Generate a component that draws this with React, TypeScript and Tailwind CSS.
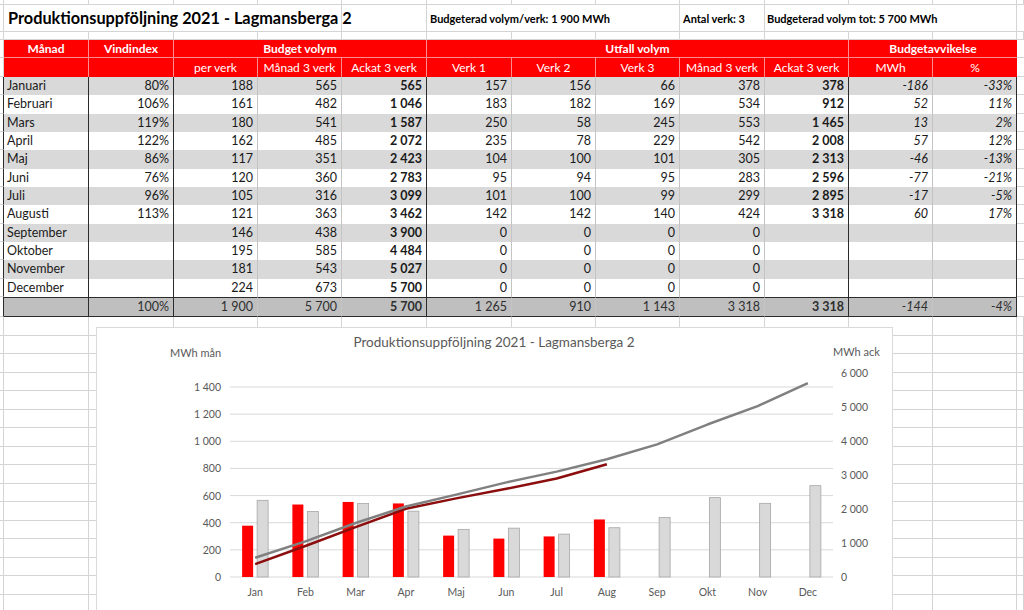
import React from 'react';

const GRID = 'grid grid-cols-[4px_85px_85px_84px_84px_85px_85px_84px_84px_85px_84px_84px_84px_7px]';
const GRIDLINE = 'border-[#d4d4d4]';
const DARK = 'border-[#2b2b2b]';
const LIGHT = 'border-[#c4c4c4]';

// right border colour for the 12 table columns (Månad .. %)
const rightBorder = [DARK, DARK, LIGHT, LIGHT, DARK, LIGHT, LIGHT, LIGHT, LIGHT, DARK, LIGHT, DARK];

const rows: string[][] = [
    ['Januari', '80%', '188', '565', '565', '157', '156', '66', '378', '378', '-186', '-33%'],
    ['Februari', '106%', '161', '482', '1 046', '183', '182', '169', '534', '912', '52', '11%'],
    ['Mars', '119%', '180', '541', '1 587', '250', '58', '245', '553', '1 465', '13', '2%'],
    ['April', '122%', '162', '485', '2 072', '235', '78', '229', '542', '2 008', '57', '12%'],
    ['Maj', '86%', '117', '351', '2 423', '104', '100', '101', '305', '2 313', '-46', '-13%'],
    ['Juni', '76%', '120', '360', '2 783', '95', '94', '95', '283', '2 596', '-77', '-21%'],
    ['Juli', '96%', '105', '316', '3 099', '101', '100', '99', '299', '2 895', '-17', '-5%'],
    ['Augusti', '113%', '121', '363', '3 462', '142', '142', '140', '424', '3 318', '60', '17%'],
    ['September', '', '146', '438', '3 900', '0', '0', '0', '0', '', '', ''],
    ['Oktober', '', '195', '585', '4 484', '0', '0', '0', '0', '', '', ''],
    ['November', '', '181', '543', '5 027', '0', '0', '0', '0', '', '', ''],
    ['December', '', '224', '673', '5 700', '0', '0', '0', '0', '', '', ''],
];
const total = ['', '100%', '1 900', '5 700', '5 700', '1 265', '910', '1 143', '3 318', '3 318', '-144', '-4%'];

const subHeaders = ['', '', 'per verk', 'Månad 3 verk', 'Ackat 3 verk', 'Verk 1', 'Verk 2', 'Verk 3', 'Månad 3 verk', 'Ackat 3 verk', 'MWh', '%'];

function GridRow({ h }: { h: string }) {
    return (
        <div className={`${GRID} ${h}`}>
            {Array.from({ length: 14 }).map((_, i) => (
                <div key={i} className={`border-r border-b ${GRIDLINE}`} />
            ))}
        </div>
    );
}

function cellClass(ci: number) {
    return [
        'flex items-center border-r whitespace-nowrap',
        rightBorder[ci],
        ci === 0 ? 'justify-start pl-[3px]' : 'justify-end pr-[4px]',
        ci === 4 || ci === 9 ? 'font-bold' : '',
        ci >= 10 ? 'italic' : '',
    ].join(' ');
}

// chart data
const months = ['Jan', 'Feb', 'Mar', 'Apr', 'Maj', 'Jun', 'Jul', 'Aug', 'Sep', 'Okt', 'Nov', 'Dec'];
const utfall = [378, 534, 553, 542, 305, 283, 299, 424];
const budget = [565, 482, 541, 485, 351, 360, 316, 363, 438, 585, 543, 673];
const budgetAck = [565, 1046, 1587, 2072, 2423, 2783, 3099, 3462, 3900, 4484, 5027, 5700];
const utfallAck = [378, 912, 1465, 2008, 2313, 2596, 2895, 3318];

const cx = (i: number) => 230 + 50.25 * (i + 0.5);
const yL = (v: number) => 577 - (v * 190) / 1400;
const yR = (v: number) => 577 - (v * 204) / 6000;

function Chart() {
    const txt = { fontFamily: 'Lato, "Liberation Sans", sans-serif', fill: '#595959' };
    const gray = budgetAck.map((v, i) => `${cx(i)},${yR(v)}`).join(' ');
    const red = utfallAck.map((v, i) => `${cx(i)},${yR(v)}`).join(' ');
    return (
        <div className="absolute left-[96px] top-[327px] w-[797px] h-[290px] border border-[#d9d9d9] bg-white">
            <svg width="795" height="288" viewBox="97 328 795 288">
                <text x={494} y={342} textAnchor="middle" dominantBaseline="central" fontSize={13.5} {...txt}>
                    Produktionsuppföljning 2021 - Lagmansberga 2
                </text>
                <text x={170} y={352} dominantBaseline="central" fontSize={11} {...txt}>MWh mån</text>
                <text x={833} y={351} dominantBaseline="central" fontSize={11} {...txt}>MWh ack</text>

                {[0, 200, 400, 600, 800, 1000, 1200, 1400].map(v => (
                    <g key={v}>
                        <line x1={230} x2={833} y1={yL(v)} y2={yL(v)} stroke="#d9d9d9" strokeWidth={1} />
                        <text x={221} y={yL(v)} textAnchor="end" dominantBaseline="central" fontSize={10.5} {...txt}>
                            {v >= 1000 ? `${Math.floor(v / 1000)} ${String(v % 1000).padStart(3, '0')}` : v}
                        </text>
                    </g>
                ))}
                {[0, 1000, 2000, 3000, 4000, 5000, 6000].map(v => (
                    <text key={v} x={841} y={yR(v)} dominantBaseline="central" fontSize={10.5} {...txt}>
                        {v === 0 ? '0' : `${v / 1000} 000`}
                    </text>
                ))}

                {budget.map((v, i) => (
                    <rect key={'b' + i} x={cx(i) + 2} y={yL(v)} width={11} height={577 - yL(v)} fill="#d9d9d9" stroke="#a6a6a6" strokeWidth={0.8} />
                ))}
                {utfall.map((v, i) => (
                    <rect key={'u' + i} x={cx(i) - 13} y={yL(v)} width={11} height={577 - yL(v)} fill="#ff0000" />
                ))}

                <polyline points={red} fill="none" stroke="#8b0d0d" strokeWidth={2.5} strokeLinejoin="round" />
                <polyline points={gray} fill="none" stroke="#808080" strokeWidth={2.5} strokeLinejoin="round" />

                {months.map((m, i) => (
                    <text key={m} x={cx(i)} y={592} textAnchor="middle" dominantBaseline="central" fontSize={10.5} {...txt}>{m}</text>
                ))}
            </svg>
        </div>
    );
}

export default function App() {
    return (
        <div className="relative w-[1024px] h-[610px] overflow-hidden bg-white text-[12.5px] text-[#1a1a1a] font-['Lato','Liberation_Sans',sans-serif] leading-none">
            <GridRow h="h-[5px]" />

            {/* title row */}
            <div className={`${GRID} h-[27px]`}>
                <div className={`border-r border-b ${GRIDLINE}`} />
                <div className={`col-span-4 flex items-center pl-[4px] border-r border-b ${GRIDLINE} text-[16.3px] font-bold text-black whitespace-nowrap`}>
                    Produktionsuppföljning 2021 - Lagmansberga 2
                </div>
                <div className={`border-r border-b ${GRIDLINE}`} />
                <div className={`col-span-3 flex items-center pl-[3px] border-r border-b ${GRIDLINE} text-[11px] font-bold text-black whitespace-nowrap`}>
                    Budgeterad volym/verk: 1 900 MWh
                </div>
                <div className={`flex items-center pl-[3px] border-r border-b ${GRIDLINE} text-[11px] font-bold text-black whitespace-nowrap`}>
                    Antal verk: 3
                </div>
                <div className={`col-span-3 flex items-center pl-[2px] border-r border-b ${GRIDLINE} text-[11px] font-bold text-black whitespace-nowrap`}>
                    Budgeterad volym tot: 5 700 MWh
                </div>
                <div className={`border-b ${GRIDLINE}`} />
            </div>

            <GridRow h="h-[8px]" />

            {/* header rows */}
            <div className={`${GRID} h-[18px] text-white font-bold text-[12px]`}>
                <div className={`border-r border-b ${GRIDLINE}`} />
                <div className="flex items-center justify-center bg-[#ff0000] border-r border-b border-[#ff8c8c]">Månad</div>
                <div className="flex items-center justify-center bg-[#ff0000] border-r border-b border-[#ff8c8c]">Vindindex</div>
                <div className="col-span-3 flex items-center justify-center bg-[#ff0000] border-r border-b border-[#ff8c8c]">Budget volym</div>
                <div className="col-span-5 flex items-center justify-center bg-[#ff0000] border-r border-b border-[#ff8c8c]">Utfall volym</div>
                <div className="col-span-2 flex items-center justify-center bg-[#ff0000] border-b border-[#ff8c8c]">Budgetavvikelse</div>
                <div className={`border-b ${GRIDLINE}`} />
            </div>
            <div className={`${GRID} h-[19px] text-white text-[12px]`}>
                <div className={`border-r border-b ${GRIDLINE}`} />
                {subHeaders.map((s, i) => (
                    <div key={i} className={`flex items-center justify-center bg-[#ff0000] whitespace-nowrap ${i < 11 ? 'border-r border-[#ff8c8c]' : ''}`}>
                        {s}
                    </div>
                ))}
                <div className={`border-b ${GRIDLINE}`} />
            </div>

            {/* data rows */}
            {rows.map((r, ri) => (
                <div key={ri} className={`${GRID} h-[18.33px] ${ri % 2 === 0 ? 'bg-[#d9d9d9]' : 'bg-white'}`}>
                    <div className={`bg-white border-r border-b ${GRIDLINE} border-r-[#2b2b2b]`} />
                    {r.map((v, ci) => (
                        <div key={ci} className={cellClass(ci)}>{v}</div>
                    ))}
                    <div className={`bg-white border-b ${GRIDLINE}`} />
                </div>
            ))}

            {/* totals */}
            <div className={`${GRID} h-[20px]`}>
                <div className={`border-r border-b ${GRIDLINE} border-r-[#2b2b2b]`} />
                {total.map((v, ci) => (
                    <div key={ci} className={`${cellClass(ci)} bg-[#bfbfbf] border-y border-y-[#2b2b2b] text-[#2e2e2e]`}>{v}</div>
                ))}
                <div className={`border-b ${GRIDLINE}`} />
            </div>

            <GridRow h="h-[19px]" />
            {Array.from({ length: 15 }).map((_, i) => (
                <GridRow key={i} h="h-[18.5px]" />
            ))}

            <Chart />
        </div>
    );
}
